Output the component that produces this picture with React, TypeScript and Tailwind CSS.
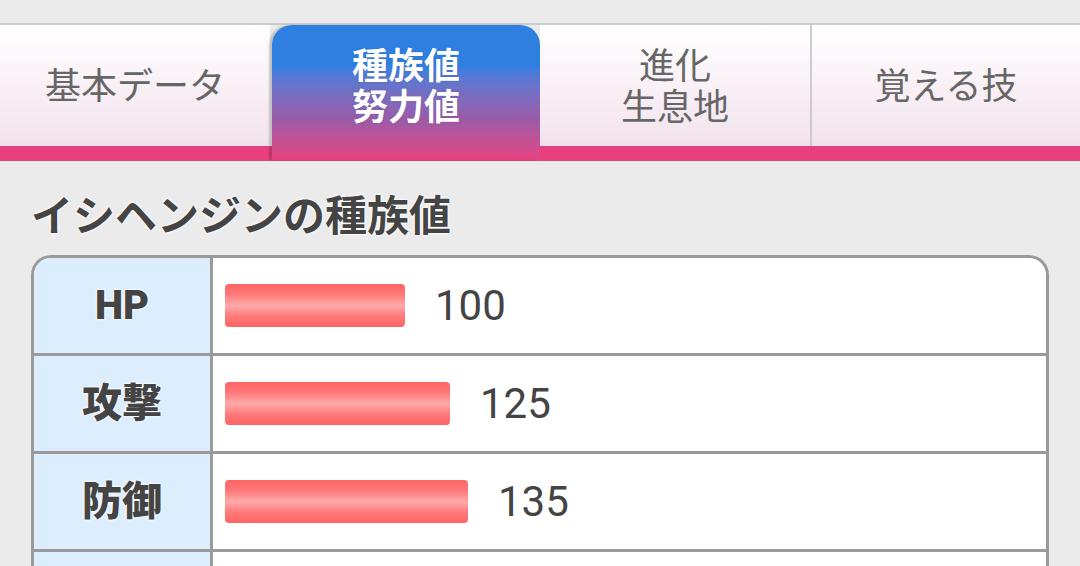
import React from "react";

type Stat = {
  label: string;
  value: number;
};

const tabs = [
  { id: "basic", lines: ["基本データ"] },
  { id: "stats", lines: ["種族値", "努力値"] },
  { id: "evo", lines: ["進化", "生息地"] },
  { id: "moves", lines: ["覚える技"] },
];

const stats: Stat[] = [
  { label: "HP", value: 100 },
  { label: "攻撃", value: 125 },
  { label: "防御", value: 135 },
  { label: "特攻", value: 20 },
  { label: "特防", value: 20 },
  { label: "素早さ", value: 70 },
];

const font = "font-['Roboto','Noto_Sans_CJK_JP',sans-serif]";

export default function App() {
  const active = "stats";

  return (
    <main className={`min-h-screen bg-[#ebebeb] pt-[23px] ${font}`}>
      {/* Tabs */}
      <nav className="border-t-2 border-[#cccccc]">
        <div className="flex h-[121px]">
          {tabs.map((t, i) => {
            const isActive = t.id === active;
            if (isActive) {
              return (
                <div
                  key={t.id}
                  className="relative z-10 -mb-[14px] ml-[2px] flex w-[268px] flex-col items-center justify-center rounded-t-[20px] bg-gradient-to-b from-[#2f7fe0] from-30% via-[#9a5aa8] via-70% to-[#e8407f] pt-[4px] pb-[14px] text-[36px] font-bold leading-[41px] text-white shadow-[-3px_0_2px_rgba(0,0,0,0.18)]"
                >
                  {t.lines.map((l) => (
                    <span key={l} className="[text-shadow:0_0_2px_rgba(0,0,0,0.15)]">{l}</span>
                  ))}
                </div>
              );
            }
            return (
              <div
                key={t.id}
                className={`flex w-[270px] flex-col items-center justify-center bg-gradient-to-b from-white to-[#f3e2ed] pt-[4px] text-[36px] leading-[41px] text-[#666666] ${
                  i === 3 ? "border-l-2 border-[#cccccc]" : ""
                }`}
              >
                {t.lines.map((l) => (
                  <span key={l}>{l}</span>
                ))}
              </div>
            );
          })}
        </div>
        <div className="h-[15px] bg-[#e8407f]" />
      </nav>

      {/* Heading */}
      <h1 className="h-[48px] mt-[32px] mb-[14px] pl-[31px] text-[42px] font-bold leading-[48px] text-[#444444] [text-shadow:0_0_3px_#fff,0_0_3px_#fff]">
        イシヘンジンの種族値
      </h1>

      {/* Stats table */}
      <div className="mx-[31px] overflow-hidden rounded-t-[20px] border-[3px] border-b-0 border-[#9a9a9a] bg-white">
        {stats.map((s) => (
          <div key={s.label} className="flex h-[98px] border-b-[3px] border-[#9a9a9a]">
            <div className="flex w-[179px] shrink-0 items-center justify-center border-r-[3px] border-[#9a9a9a] bg-[#dcedfd] text-[40px] font-black text-[#444444] [text-shadow:0_0_3px_#fff,0_0_3px_#fff]">
              {s.label}
            </div>
            <div className="flex flex-1 items-center pl-3">
              <div
                className="h-[43px] rounded-[4px] bg-[linear-gradient(to_bottom,#ff6464_0%,#ff7a7a_25%,#ffaaaa_50%,#ff7a7a_75%,#ff6464_100%)]"
                style={{ width: s.value * 1.8 }}
              />
              <span className="ml-[30px] text-[42px] text-[#444444]">{s.value}</span>
            </div>
          </div>
        ))}
      </div>
    </main>
  );
}
